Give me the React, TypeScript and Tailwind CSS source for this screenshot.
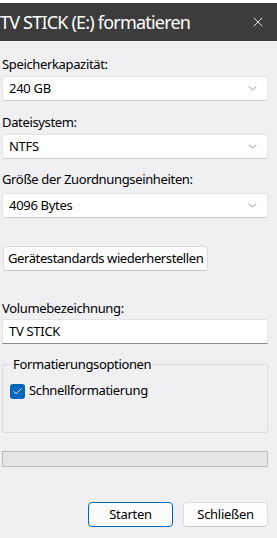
import { X, ChevronDown, Check } from 'lucide-react';

const FONT = { fontFamily: '"Noto Sans", "Liberation Sans", sans-serif' };

const SelectBox = function ({ value }: { value: string }) {
  return (
    <div className="flex h-[25px] items-center justify-between rounded-[3px] border border-[#e3e3e3] border-b-[#cfcfcf] bg-white pl-[6px] pr-[8px]">
      <span className="text-[13px] tracking-[-0.3px] text-black">{value}</span>
      <ChevronDown size={13} strokeWidth={1.2} className="text-[#5a5a5a]" />
    </div>
  );
};

const Label = function ({ text }: { text: string }) {
  return <p className="h-[18px] text-[13px] leading-[18px] tracking-[-0.35px] text-black">{text}</p>;
};

const App = function () {
  return (
    <div style={FONT} className="flex h-[538px] w-[277px] flex-col overflow-hidden bg-[#f0eff1]">
      <div className="h-[3px] bg-white" />
      <div className="flex h-[38px] items-center justify-between bg-[#3c3c3c] pr-[11px]">
        <span className="text-[18px] leading-none tracking-[-0.8px] text-white">TV STICK (E:) formatieren</span>
        <X size={16} strokeWidth={1.3} className="text-white" />
      </div>
      <div className="flex flex-col pl-[2px] pr-[9px]">
        <div className="mt-[14px]">
          <Label text="Speicherkapazität:" />
        </div>
        <div className="mt-[3px]">
          <SelectBox value="240 GB" />
        </div>
        <div className="mt-[12px]">
          <Label text="Dateisystem:" />
        </div>
        <div className="mt-[3px]">
          <SelectBox value="NTFS" />
        </div>
        <div className="mt-[11px]">
          <Label text="Größe der Zuordnungseinheiten:" />
        </div>
        <div className="mt-[5px]">
          <SelectBox value="4096 Bytes" />
        </div>
        <div className="mt-[27px] pl-[1px]">
          <button className="h-[25px] rounded-[3px] border border-[#dcdcdc] border-b-[#c8c8c8] bg-[#fbfbfb] px-[4px] text-[13px] tracking-[-0.4px] text-black">
            Gerätestandards wiederherstellen
          </button>
        </div>
        <div className="mt-[28px]">
          <Label text="Volumebezeichnung:" />
        </div>
        <div className="mt-[2px] flex h-[25px] items-center border border-[#e3e3e3] border-b-[#8a8a8a] bg-white pl-[6px]">
          <span className="text-[13px] tracking-[-0.3px] text-black">TV STICK</span>
        </div>
        <fieldset className="mt-[11px] h-[78px] rounded-[2px] border border-[#dcdcdc] px-[7px]">
          <legend className="ml-[1px] px-[2px] text-[13px] leading-[18px] tracking-[-0.35px] text-black">Formatierungsoptionen</legend>
          <label className="mt-[8px] flex items-center gap-[4px]">
            <span className="flex h-[15px] w-[15px] items-center justify-center rounded-[3px] bg-[#0067c0]">
              <Check size={11} strokeWidth={2} className="text-white" />
            </span>
            <span className="text-[13px] tracking-[-0.35px] text-black">Schnellformatierung</span>
          </label>
        </fieldset>
        <div className="mt-[18px] h-[16px] border border-[#bcbcbc] bg-[#e6e6e6]" />
        <div className="mt-[35px] flex justify-end gap-[10px]">
          <button className="h-[25px] w-[85px] rounded-[4px] border border-[#0067c0] bg-[#fcfcfd] text-[13px] tracking-[-0.3px] text-black">
            Starten
          </button>
          <button className="h-[25px] w-[85px] rounded-[4px] border border-[#dcdcdc] border-b-[#c8c8c8] bg-[#fdfdfd] text-[13px] tracking-[-0.3px] text-black">
            Schließen
          </button>
        </div>
      </div>
    </div>
  );
};

export default App;
